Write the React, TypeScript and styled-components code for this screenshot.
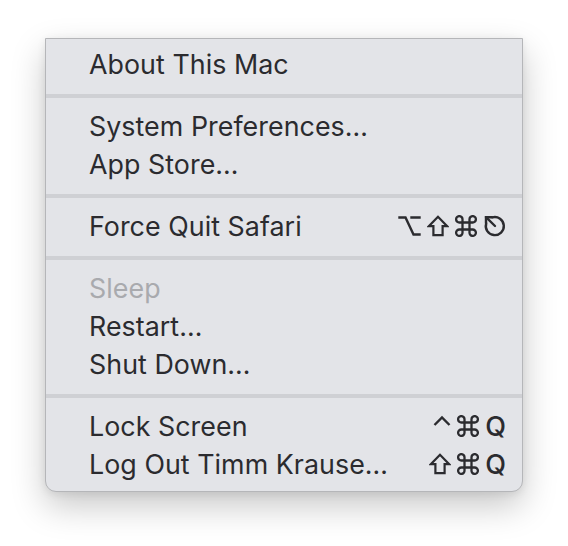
import React from "react";
import styled, { createGlobalStyle } from "styled-components";

const GlobalStyle = createGlobalStyle`
  html, body {
    margin: 0;
    padding: 0;
    background: #ffffff;
  }
  body {
    width: 568px;
    height: 546px;
    overflow: hidden;
  }
`;

const Page = styled.div`
  padding: 38px 0 0 45px;
`;

const Menu = styled.div`
  box-sizing: border-box;
  width: 478px;
  padding: 7px 0;
  background: #e3e4e8;
  border: 1px solid #b5b6b9;
  border-radius: 0 0 11px 11px;
  box-shadow: 0 14px 34px rgba(0, 0, 0, 0.22), 0 2px 8px rgba(0, 0, 0, 0.08);
  font-family: Inter, "Noto Sans", sans-serif;
`;

const Item = styled.div<{ $disabled?: boolean }>`
  box-sizing: border-box;
  height: 38px;
  display: flex;
  align-items: center;
  justify-content: space-between;
  padding: 0 16px 2px 43px;
  font-size: 26.8px;
  color: ${(p) => (p.$disabled ? "#a9aaae" : "#2b2b2f")};
  letter-spacing: 0.05px;
`;

const Separator = styled.div`
  height: 24px;
  display: flex;
  align-items: center;

  &::after {
    content: "";
    flex: 1;
    height: 4px;
    background: #cfd0d4;
  }
`;

const Keys = styled.span`
  display: flex;
  align-items: center;
  gap: 6px;
  color: #2b2b2f;
`;

const Letter = styled.span`
  font-size: 27px;
  line-height: 1;
  font-weight: 500;
`;

const Glyph = styled.svg<{ $lift?: number }>`
  display: block;
  flex: none;
  margin-bottom: ${(p) => p.$lift ?? 0}px;
`;

const stroke = {
  fill: "none",
  stroke: "#2b2b2f",
  strokeWidth: 2.4,
  strokeLinecap: "square" as const,
  strokeLinejoin: "miter" as const,
};

const ControlIcon = () => (
  <Glyph width="18" height="22" viewBox="0 0 18 22" $lift={0}>
    <path {...stroke} strokeLinecap="butt" d="M1.5 10L9 2.5L16.5 10" />
  </Glyph>
);

const OptionIcon = () => (
  <Glyph width="23" height="22" viewBox="0 0 23 22">
    <path {...stroke} d="M1.5 2.5H7.5L15.5 19.5H21.5M13.5 2.5H21.5" />
  </Glyph>
);

const ShiftIcon = () => (
  <Glyph width="22" height="22" viewBox="0 0 22 22">
    <path {...stroke} strokeWidth={2.2} d="M11 1.8L1.8 11.2H6.4V20.2H15.6V11.2H20.2Z" />
  </Glyph>
);

const CommandIcon = () => (
  <Glyph width="22" height="22" viewBox="0 0 22 22">
    <path
      {...stroke}
      strokeWidth={2.3}
      d="M7.5 7.5V4.5A3.2 3.2 0 1 0 4.5 7.5H17.5A3.2 3.2 0 1 0 14.5 4.5V17.5A3.2 3.2 0 1 0 17.5 14.5H4.5A3.2 3.2 0 1 0 7.5 17.5Z"
    />
  </Glyph>
);

const EscIcon = () => (
  <Glyph width="23" height="24" viewBox="0 0 23 24">
    <path {...stroke} strokeLinecap="round" d="M9.5 3.4A9 9 0 1 1 3.2 9.5" />
    <path {...stroke} strokeLinecap="round" d="M3 3.2L12 12" />
    <path {...stroke} strokeLinecap="round" d="M3 9.2V3.2H9" />
  </Glyph>
);

export default function App() {
  return (
    <Page>
      <GlobalStyle />
      <Menu>
        <Item>About This Mac</Item>
        <Separator />
        <Item>System Preferences…</Item>
        <Item>App Store…</Item>
        <Separator />
        <Item>
          Force Quit Safari
          <Keys>
            <OptionIcon />
            <ShiftIcon />
            <CommandIcon />
            <EscIcon />
          </Keys>
        </Item>
        <Separator />
        <Item $disabled>Sleep</Item>
        <Item>Restart…</Item>
        <Item>Shut Down…</Item>
        <Separator />
        <Item>
          Lock Screen
          <Keys>
            <ControlIcon />
            <CommandIcon />
            <Letter>Q</Letter>
          </Keys>
        </Item>
        <Item>
          Log Out Timm Krause…
          <Keys>
            <ShiftIcon />
            <CommandIcon />
            <Letter>Q</Letter>
          </Keys>
        </Item>
      </Menu>
    </Page>
  );
}
